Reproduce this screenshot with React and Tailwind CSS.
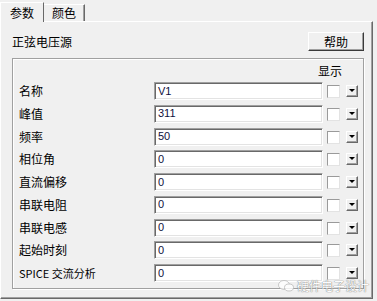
import React from "react";

const rows = [
  { label: "名称", value: "V1" },
  { label: "峰值", value: "311" },
  { label: "频率", value: "50" },
  { label: "相位角", value: "0" },
  { label: "直流偏移", value: "0" },
  { label: "串联电阻", value: "0" },
  { label: "串联电感", value: "0" },
  { label: "起始时刻", value: "0" },
  { label: "SPICE 交流分析", value: "0", latin: true },
];

function DropButton() {
  return (
    <div className="w-[12px] h-[12px] flex items-center justify-center bg-[#f0f0f0] border border-t-white border-l-white border-b-[#696969] border-r-[#696969] shadow-[inset_-1px_-1px_0_#a0a0a0]">
      <svg width="6" height="4" viewBox="0 0 6 4">
        <path d="M0 0h6L3 3z" fill="#000" />
      </svg>
    </div>
  );
}

export default function App() {
  return (
    <div
      className="w-[377px] h-[301px] bg-[#f0f0f0] relative overflow-hidden text-black"
      style={{ fontFamily: '"Noto Sans CJK SC", "Liberation Sans", sans-serif' }}
    >
      {/* tabs */}
      <div className="h-[21px] flex items-end">
        <div className="h-[20px] w-[44px] -mb-px relative z-10 bg-[#f0f0f0] border-t border-l border-t-white border-l-white border-r border-r-[#696969] flex items-center justify-center text-[12px] leading-none">
          参数
        </div>
        <div className="h-[17px] w-[41px] bg-[#f0f0f0] border-t border-t-white border-r border-r-[#696969] shadow-[inset_-1px_0_0_#a0a0a0] flex items-center justify-center text-[12px] leading-none">
          颜色
        </div>
      </div>

      {/* panel */}
      <div className="w-[373px] h-[278px] border border-t-white border-l-white border-r-[#696969] border-b-[#696969] shadow-[inset_-1px_-1px_0_#a0a0a0] flex flex-col">
        <div className="mt-[10px] h-[19px] flex items-center justify-between pl-[11px] pr-[8px]">
          <span className="text-[12px] leading-none">正弦电压源</span>
          <button className="w-[56px] h-[19px] flex items-center justify-center text-[12px] leading-none bg-[#f0f0f0] border border-t-white border-l-white border-b-[#3a3a3a] border-r-[#3a3a3a] shadow-[inset_-1px_-1px_0_#a0a0a0]">
            帮助
          </button>
        </div>

        {/* group box */}
        <div className="mt-[7px] ml-[11px] w-[352px] h-[231px] border border-[#a0a0a0] shadow-[inset_1px_1px_0_#fff,1px_1px_0_#fff] flex flex-col">
          <div className="h-[23px] flex items-center pl-[305px] text-[12px] leading-none">显示</div>
          {rows.map((r) => (
            <div key={r.label} className="h-[22.75px] flex items-start pl-[6px]">
              <div className="w-[135px] h-[18px] flex items-center">
                <span className={r.latin ? "text-[11px] leading-none" : "text-[12px] leading-none"}>{r.label}</span>
              </div>
              <div
                className="w-[169px] h-[18px] bg-white border border-t-[#a0a0a0] border-l-[#a0a0a0] border-b-white border-r-white shadow-[inset_1px_1px_0_#696969,inset_-1px_-1px_0_#e3e3e3] flex items-center pl-[3px] text-[11px] leading-none text-[#101040]"
                style={{ fontFamily: '"Liberation Sans", sans-serif' }}
              >
                {r.value}
              </div>
              <div className="ml-[4px] mt-[3px] w-[13px] h-[13px] bg-white border border-t-[#9a9a9a] border-l-[#9a9a9a] border-b-[#e3e3e3] border-r-[#e3e3e3]" />
              <div className="ml-[6px] mt-[3px]">
                <DropButton />
              </div>
            </div>
          ))}
        </div>
      </div>

      {/* watermark */}
      <div className="absolute left-[278px] top-[280px] flex items-center gap-[3px] opacity-80">
        <svg width="16" height="12" viewBox="0 0 16 12">
          <ellipse cx="6" cy="5" rx="5.5" ry="4.5" fill="#fff" stroke="#b0b0b0" strokeWidth="0.8" />
          <ellipse cx="11" cy="7.5" rx="4.5" ry="3.5" fill="#fff" stroke="#b0b0b0" strokeWidth="0.8" />
        </svg>
        <span
          className="text-[12px] leading-none text-white"
          style={{ textShadow: "0 0 1px #666, 0 0 1px #666" }}
        >
          硬件电子设计
        </span>
      </div>
    </div>
  );
}
